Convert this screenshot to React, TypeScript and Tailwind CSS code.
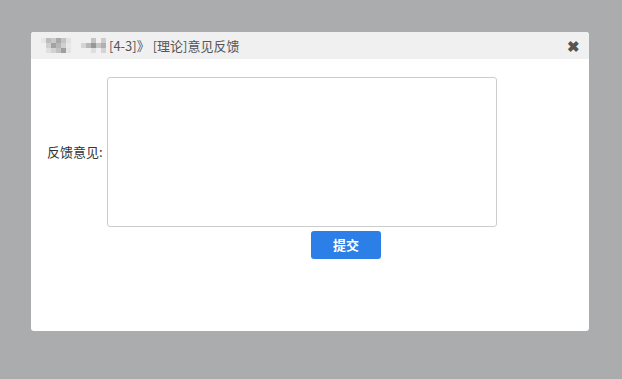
import React from 'react';

const Mosaic: React.FC<{ cells: string[]; cols: number }> = ({ cells, cols }) => (
  <span
    className="inline-grid grid-rows-[repeat(3,5px)]"
    style={{ gridTemplateColumns: `repeat(${cols}, 5px)` }}
  >
    {cells.map((c, i) => (
      <span key={i} style={{ background: c }} />
    ))}
  </span>
);

export default function App() {
  const a = ['#e6e6e6', '#bcbcbc', '#c9c9c9', '#a8a8a8', '#c4c4c4', '#e2e2e2',
    '#f0f0f0', '#cfcfcf', '#a3a3a3', '#b6b6b6', '#d0d0d0', '#e8e8e8',
    '#f0f0f0', '#e0e0e0', '#d2d2d2', '#c1c1c1', '#9f9f9f', '#e4e4e4'];
  const b = ['#f0f0f0', '#f0f0f0', '#c4c4c4', '#f0f0f0', '#cccccc', '#f0f0f0',
    '#d4d4d4', '#b8b8b8', '#979797', '#c6c6c6', '#b0b0b0', '#f0f0f0',
    '#f0f0f0', '#f0f0f0', '#dedede', '#f0f0f0', '#d4d4d4', '#f0f0f0'];

  return (
    <div className="w-[622px] h-[379px] bg-[#abacae] pt-[32px] pl-[31px] font-['Microsoft_YaHei','Noto_Sans_CJK_SC',sans-serif]">
      <div className="w-[558px] h-[299px] bg-white rounded-[3px] overflow-hidden flex flex-col">
        {/* Header */}
        <div className="h-[27px] bg-[#f0f0f0] flex items-center pl-[10px] pr-[9px] text-[13px] text-[#555]">
          <Mosaic cells={a} cols={6} />
          <span className="w-[10px]" />
          <Mosaic cells={b} cols={6} />
          <span className="-ml-[2px]">[4-3]》 [理论]意见反馈</span>
          <span className="ml-auto text-[#555] text-[15px] font-bold leading-none">✖</span>
        </div>

        {/* Body */}
        <div className="flex flex-col pl-[16px] pt-[18px]">
          <div className="flex items-center">
            <label className="w-[60px] text-[13px] text-[#333]">反馈意见:</label>
            <textarea className="w-[390px] h-[150px] border border-[#ccc] rounded-[3px] resize-none outline-none" />
          </div>
          <div className="pl-[264px] pt-[4px]">
            <button className="w-[70px] h-[28px] bg-[#2b7fe6] text-white text-[13px] font-bold rounded-[3px]">
              提交
            </button>
          </div>
        </div>
      </div>
    </div>
  );
}
